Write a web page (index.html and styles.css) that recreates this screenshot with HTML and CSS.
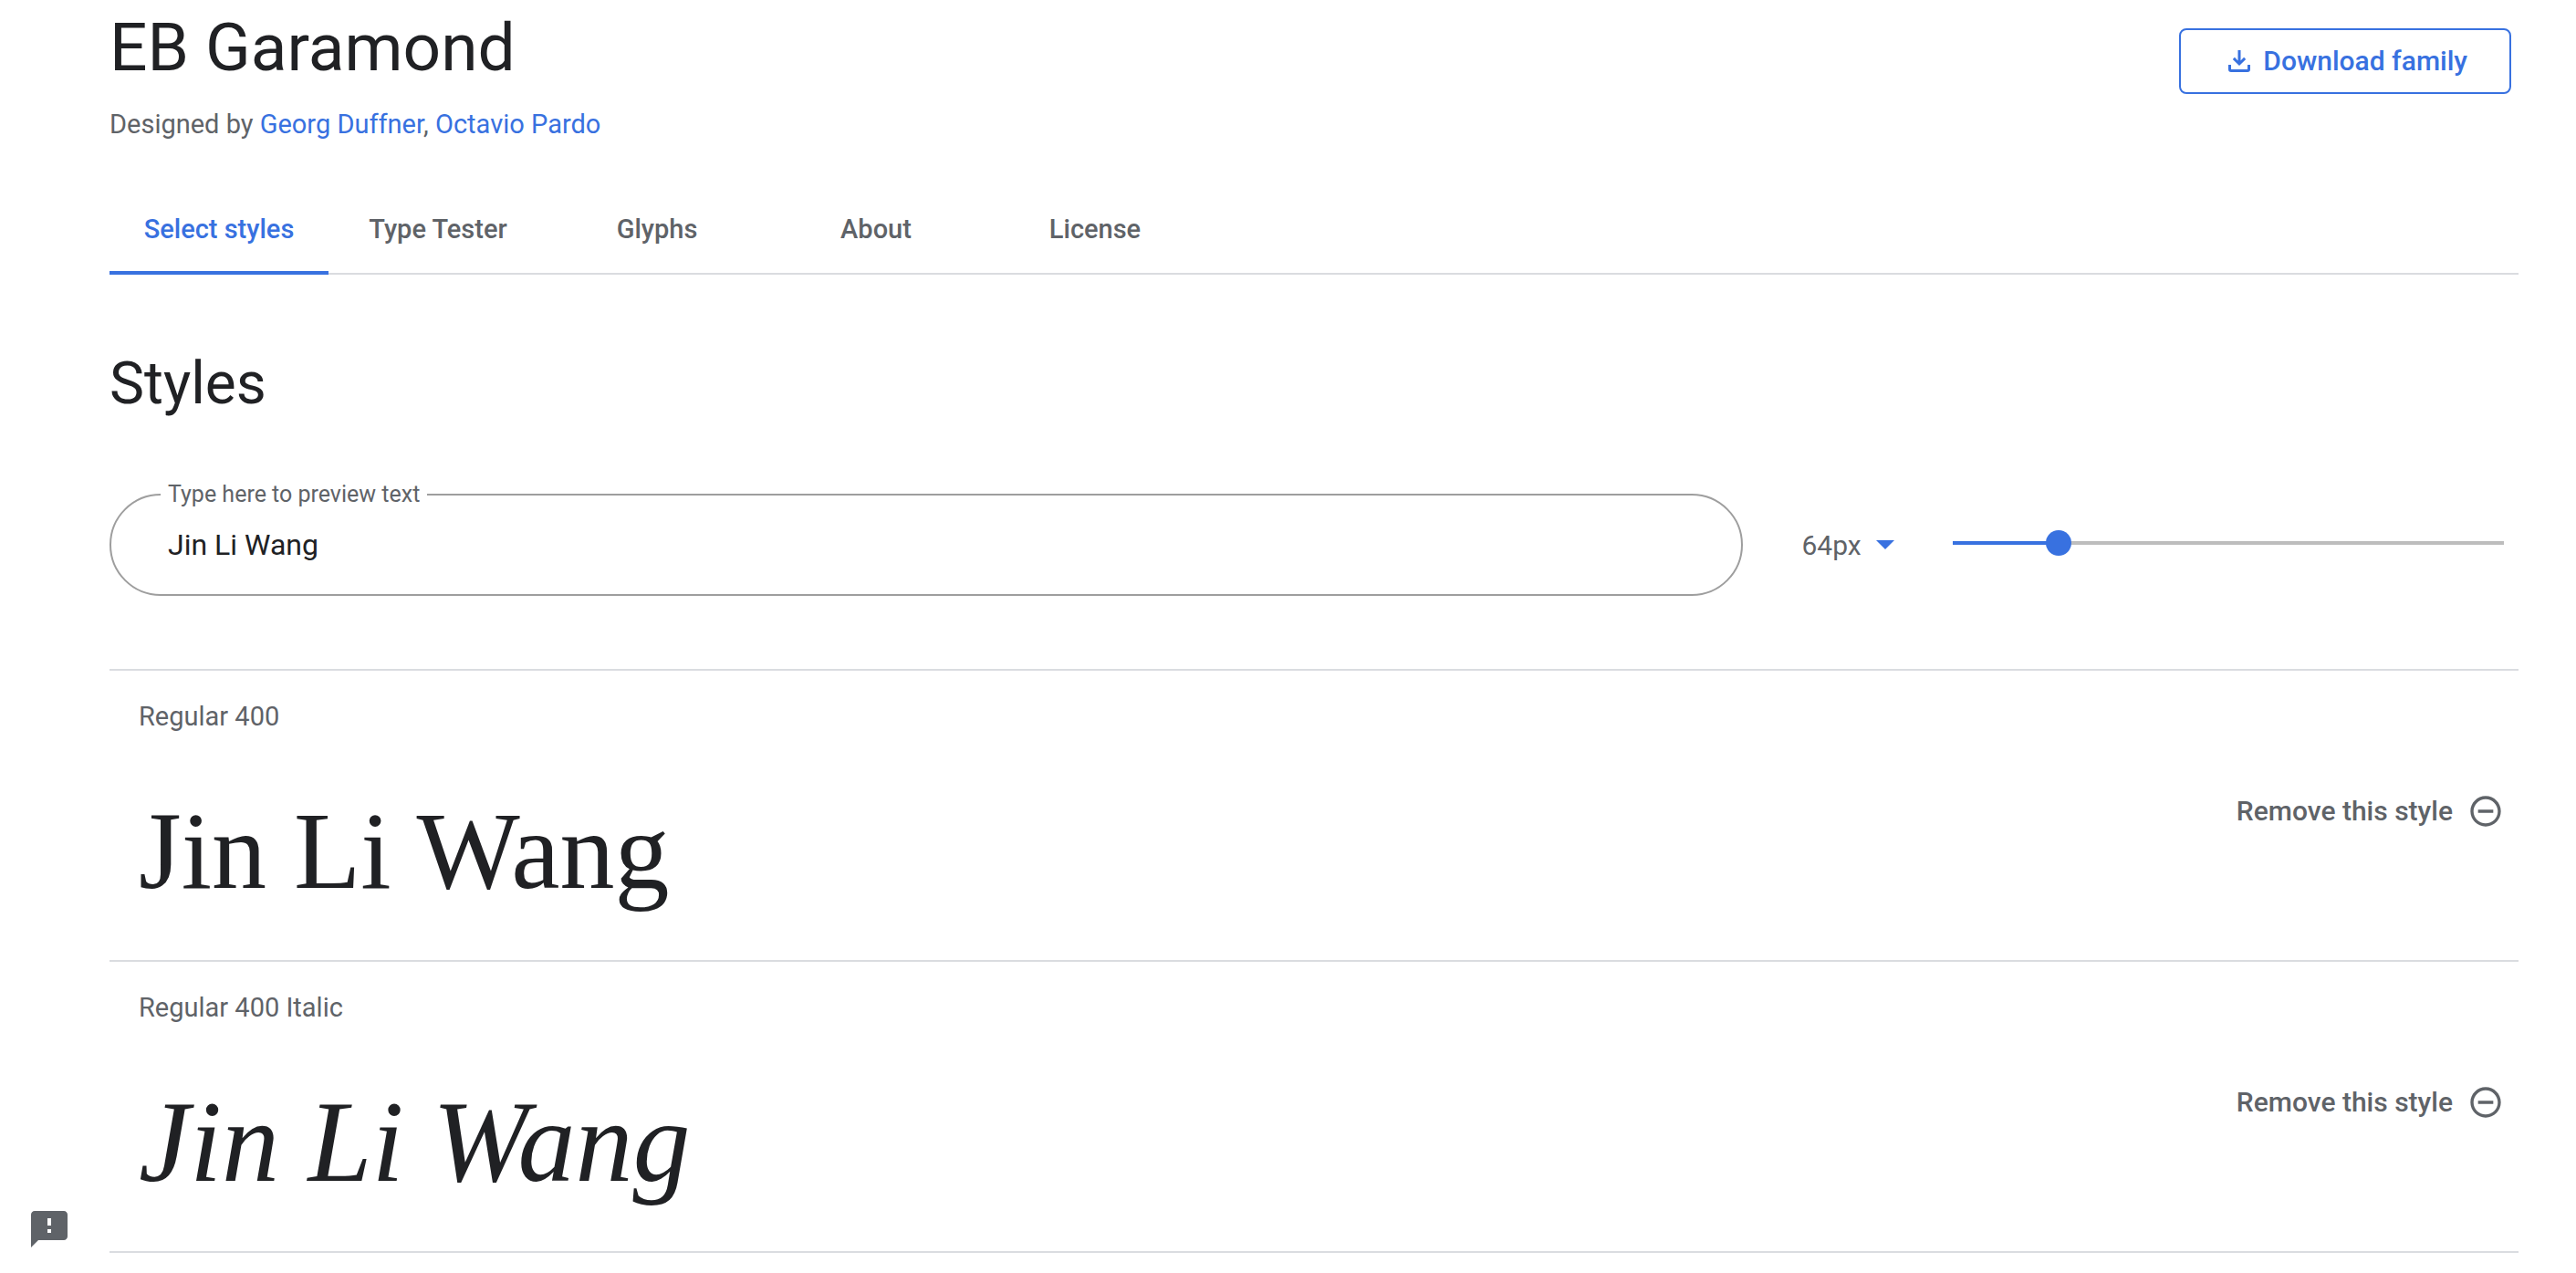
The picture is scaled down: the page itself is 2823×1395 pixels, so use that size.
FILE: index.html
```html
<!DOCTYPE html>
<html lang="en">
<head>
<meta charset="utf-8">
<meta name="viewport" content="width=device-width, initial-scale=1">
<title>EB Garamond</title>
<link rel="stylesheet" href="styles.css">
</head>
<body>
<main class="page">
  <header class="family">
    <div class="family-info">
      <h1 class="family-name">EB Garamond</h1>
      <p class="designers">Designed by <a href="#georg-duffner">Georg Duffner</a>, <a href="#octavio-pardo">Octavio Pardo</a></p>
    </div>
    <button class="download" type="button">
      <svg class="download-icon" viewBox="0 0 24 24" aria-hidden="true">
        <path d="M10.500 0h3v11.400l3.600-3.600 2.100 2.100L12 17.100 4.800 9.900l2.100-2.100 3.600 3.600z"/>
        <path d="M0 16h3v5h18v-5h3v5a3 3 0 0 1-3 3H3a3 3 0 0 1-3-3z"/>
      </svg>
      Download family
    </button>
  </header>

  <nav class="tabs" aria-label="Family sections">
    <a class="tab tab-active" href="#styles" aria-current="page">Select styles</a>
    <a class="tab" href="#tester">Type Tester</a>
    <a class="tab" href="#glyphs">Glyphs</a>
    <a class="tab" href="#about">About</a>
    <a class="tab" href="#license">License</a>
  </nav>

  <section id="styles">
    <h2 class="section-title">Styles</h2>
    <div class="controls">
      <div class="field">
        <label class="field-label" for="preview">Type here to preview text</label>
        <input class="field-input" id="preview" type="text" value="Jin Li Wang">
      </div>
      <div class="size">
        <select class="size-select" aria-label="Font size">
          <option>64px</option>
          <option>96px</option>
        </select>
        <svg class="size-arrow" viewBox="0 0 20 10" aria-hidden="true"><path d="M0 0h20L10 10z"/></svg>
      </div>
      <div class="slider">
        <input class="slider-input" type="range" min="8" max="300" value="64" aria-label="Font size" style="--fill: 0.192">
      </div>
    </div>

    <ul class="styles">
      <li class="style">
        <div class="style-main">
          <h3 class="style-name">Regular 400</h3>
          <p class="sample">Jin Li Wang</p>
        </div>
        <button class="remove" type="button">
          Remove this style
          <svg class="remove-icon" viewBox="0 0 24 24" aria-hidden="true"><path d="M7 11v2h10v-2H7zm5-9C6.480 2 2 6.480 2 12s4.480 10 10 10 10-4.480 10-10S17.520 2 12 2zm0 18c-4.410 0-8-3.590-8-8s3.590-8 8-8 8 3.590 8 8-3.590 8-8 8z"/></svg>
        </button>
      </li>
      <li class="style">
        <div class="style-main">
          <h3 class="style-name">Regular 400 Italic</h3>
          <p class="sample sample-italic">Jin Li Wang</p>
        </div>
        <button class="remove" type="button">
          Remove this style
          <svg class="remove-icon" viewBox="0 0 24 24" aria-hidden="true"><path d="M7 11v2h10v-2H7zm5-9C6.480 2 2 6.480 2 12s4.480 10 10 10 10-4.480 10-10S17.520 2 12 2zm0 18c-4.410 0-8-3.590-8-8s3.590-8 8-8 8 3.590 8 8-3.590 8-8 8z"/></svg>
        </button>
      </li>
    </ul>
  </section>
</main>

<button class="feedback" type="button" aria-label="Send feedback">
  <svg class="feedback-icon" viewBox="0 0 20 20" aria-hidden="true"><path d="M18 0H2C.9 0 0 .9 0 2v18l4-4h14c1.100 0 2-.9 2-2V2c0-1.100-.9-2-2-2zm-7 12H9v-2h2v2zm0-4H9V4h2v4z"/></svg>
</button>
</body>
</html>
```

FILE: styles.css
```css
:root {
  --blue: #3871e0;
  --ink: #202124;
  --muted: #5f6368;
  --line: #dadce0;
  --outline: #9e9e9e;
}

* {
  box-sizing: border-box;
}

body {
  margin: 0;
  background: #fff;
  color: var(--ink);
  font: 400 29px/40px Roboto, sans-serif;
}

h1, h2, h3, p, ul {
  margin: 0;
  padding: 0;
  font-weight: 400;
}

button, input, select {
  margin: 0;
  font: inherit;
}

a {
  color: var(--blue);
  text-decoration: none;
}

.page {
  padding: 8px 63px 0 120px;
}

.family {
  display: flex;
  justify-content: space-between;
  align-items: flex-start;
  padding-right: 8px;
}

.family-name {
  font-size: 73px;
  line-height: 88px;
}

.designers {
  margin-top: 20px;
  color: var(--muted);
}

.download {
  display: flex;
  align-items: center;
  gap: 14px;
  height: 72px;
  margin-top: 23px;
  padding: 0 46px 0 52px;
  border: 2px solid var(--blue);
  border-radius: 8px;
  background: none;
  color: var(--blue);
  font-size: 30px;
  font-weight: 500;
}

.download-icon {
  width: 24px;
  height: 24px;
  fill: currentColor;
}

.tabs {
  display: flex;
  margin-top: 45px;
  box-shadow: inset 0 -2px var(--line);
}

.tab {
  width: 240px;
  padding: 30px 0 26px;
  border-bottom: 4px solid transparent;
  color: var(--muted);
  font-weight: 500;
  text-align: center;
}

.tab-active {
  border-color: var(--blue);
  color: var(--blue);
}

.section-title {
  margin-top: 80px;
  font-size: 64px;
  line-height: 80px;
}

.controls {
  display: flex;
  align-items: center;
  gap: 64px;
  margin-top: 80px;
  padding-right: 16px;
}

.field {
  position: relative;
  flex: 1;
}

.field-input {
  display: block;
  width: 100%;
  height: 112px;
  padding: 0 62px;
  border: 2px solid var(--outline);
  border-radius: 56px;
  outline: 0;
  background: none;
  color: var(--ink);
  font-size: 32px;
}

.field-label {
  position: absolute;
  top: -15px;
  left: 56px;
  padding: 0 8px;
  background: #fff;
  color: var(--muted);
  font-size: 25px;
  line-height: 32px;
}

.size {
  display: flex;
  align-items: center;
  width: 102px;
}

.size-select {
  flex: 1;
  min-width: 0;
  padding: 2px 0 0;
  border: 0;
  appearance: none;
  background: none;
  color: var(--muted);
  font-size: 30px;
}

.size-arrow {
  width: 20px;
  height: 10px;
  fill: var(--blue);
}

.slider {
  display: flex;
  width: 23%;
  padding-bottom: 4px;
}

.slider-input {
  flex: 1;
  height: 28px;
  margin: 0 -14px;
  appearance: none;
  background: none;
}

.slider-input::-webkit-slider-runnable-track {
  height: 4px;
  background: linear-gradient(to right,
    transparent 14px,
    var(--blue) 14px calc(14px + (100% - 28px) * var(--fill)),
    #bdbdbd 0 calc(100% - 14px),
    transparent 0);
}

.slider-input::-webkit-slider-thumb {
  width: 28px;
  height: 28px;
  margin-top: -12px;
  appearance: none;
  border-radius: 50%;
  background: var(--blue);
}

.styles {
  margin-top: 80px;
  border-top: 2px solid var(--line);
  list-style: none;
}

.style {
  display: flex;
  justify-content: space-between;
  align-items: flex-start;
  padding: 30px 16px 35px 32px;
  border-bottom: 2px solid var(--line);
}

.style-name {
  color: var(--muted);
  font-size: 29px;
}

.sample {
  margin-top: 44px;
  font: 120px/168px "Liberation Serif", serif;
  white-space: nowrap;
}

.sample-italic {
  font-size: 126px;
  font-style: italic;
}

.remove {
  display: flex;
  align-items: center;
  gap: 16px;
  margin-top: 104px;
  padding: 0;
  border: 0;
  background: none;
  color: var(--muted);
  font-size: 30px;
  font-weight: 500;
}

.remove-icon {
  width: 40px;
  height: 40px;
  fill: currentColor;
}

.feedback {
  position: fixed;
  bottom: 28px;
  left: 34px;
  padding: 0;
  border: 0;
  background: none;
  color: var(--muted);
}

.feedback-icon {
  display: block;
  width: 40px;
  height: 40px;
  fill: currentColor;
}
```
